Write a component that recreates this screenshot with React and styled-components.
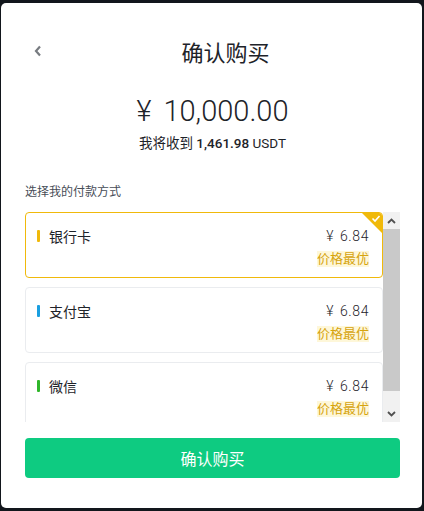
import React, { useState } from 'react';
import styled, { createGlobalStyle, css } from 'styled-components';

const GlobalStyle = createGlobalStyle`
  html, body {
    margin: 0;
    padding: 0;
    background: #12161c;
  }
  body {
    font-family: Roboto, "Noto Sans CJK SC", sans-serif;
    color: #1e2329;
  }
  * { box-sizing: border-box; }
`;

const methods = [
  { id: 'bank', name: '银行卡', price: '6.84', color: '#f0b90b' },
  { id: 'alipay', name: '支付宝', price: '6.84', color: '#1a9fe0' },
  { id: 'wechat', name: '微信', price: '6.84', color: '#2fb62a' },
];

const Chevron = ({ up }) => (
  <svg width="9" height="6" viewBox="0 0 9 6">
    <path
      d={up ? 'M1 5 L4.5 1.5 L8 5' : 'M1 1 L4.5 4.5 L8 1'}
      fill="none"
      stroke="#505050"
      strokeWidth="1.8"
    />
  </svg>
);

const App = () => {
  const [selected, setSelected] = useState('bank');

  return (
    <>
      <GlobalStyle />
      <Panel>
        <Header>
          <BackButton aria-label="返回">
            <svg width="8" height="12" viewBox="0 0 8 12">
              <path d="M6 1.5 L2 6 L6 10.5" fill="none" stroke="#777b80" strokeWidth="2.2" />
            </svg>
          </BackButton>
          <Title>确认购买</Title>
        </Header>

        <Amount><Currency gap={12}>¥</Currency>10,000.00</Amount>
        <Receive>
          我将收到 <strong>1,461.98</strong> USDT
        </Receive>

        <SectionLabel>选择我的付款方式</SectionLabel>

        <ListFrame>
          <MethodList>
            {methods.map(m => (
              <MethodCard
                key={m.id}
                active={selected === m.id}
                onClick={() => setSelected(m.id)}
              >
                <CardRow>
                  <MethodName barColor={m.color}>{m.name}</MethodName>
                  <Price><Currency gap={6}>¥</Currency>{m.price}</Price>
                </CardRow>
                <CardRow>
                  <span />
                  <BestTag>价格最优</BestTag>
                </CardRow>
                {selected === m.id && (
                  <CornerMark>
                    <svg width="22" height="22" viewBox="0 0 22 22">
                      <path d="M0 0 H22 V22 Z" fill="#f0b90b" />
                      <path d="M11.5 6.5 L14 9 L18.5 4" fill="none" stroke="#fff" strokeWidth="1.6" />
                    </svg>
                  </CornerMark>
                )}
              </MethodCard>
            ))}
          </MethodList>
          <ScrollBar>
            <ScrollArrow><Chevron up /></ScrollArrow>
            <ScrollTrack>
              <ScrollThumb />
            </ScrollTrack>
            <ScrollArrow><Chevron /></ScrollArrow>
          </ScrollBar>
        </ListFrame>

        <ConfirmButton>确认购买</ConfirmButton>
      </Panel>
    </>
  );
};

const Panel = styled.div`
  margin: 3px 2px 3px 1px;
  height: 505px;
  background: #fff;
  border-radius: 5px;
  padding: 29px 22px 0 24px;
  display: flex;
  flex-direction: column;
`;

const Header = styled.div`
  display: flex;
  align-items: center;
  height: 38px;
`;

const BackButton = styled.button`
  width: 26px;
  height: 26px;
  padding: 0 0 0 9px;
  border: none;
  background: none;
  display: flex;
  align-items: center;
  cursor: pointer;
`;

const Title = styled.h1`
  flex: 1;
  margin: 0;
  text-align: center;
  font-size: 22px;
  font-weight: 400;
  color: #1e2329;
`;

const Currency = styled.span`
  margin-right: ${({ gap }) => gap}px;
`;

const Amount = styled.div`
  margin-top: 23px;
  text-align: center;
  font-size: 29px;
  font-weight: 300;
  line-height: 36px;
  color: #1e2329;
`;

const Receive = styled.div`
  margin-top: 5px;
  text-align: center;
  font-size: 13.5px;
  line-height: 18px;
  color: #1e2329;

  strong {
    font-weight: 500;
  }
`;

const SectionLabel = styled.div`
  margin-top: 32px;
  font-size: 12px;
  line-height: 16px;
  color: #474d57;
`;

const ListFrame = styled.div`
  margin-top: 12px;
  height: 210px;
  display: flex;
`;

const MethodList = styled.div`
  flex: 1;
  min-width: 0;
  overflow: hidden;
`;

const ScrollBar = styled.div`
  width: 17px;
  display: flex;
  flex-direction: column;
  background: #f1f1f1;
`;

const ScrollArrow = styled.div`
  height: 17px;
  display: flex;
  align-items: center;
  justify-content: center;
`;

const ScrollTrack = styled.div`
  flex: 1;
`;

const ScrollThumb = styled.div`
  height: 162px;
  background: #c9c9c9;
`;

const MethodCard = styled.div`
  position: relative;
  height: 66px;
  margin-bottom: 9px;
  padding: 14px 13px 0 11px;
  border: 1px solid #eaecef;
  border-radius: 4px;
  overflow: hidden;
  cursor: pointer;
  ${({ active }) => active && css`
    border-color: #f0b90b;
  `}
`;

const CardRow = styled.div`
  display: flex;
  justify-content: space-between;
  align-items: center;
  height: 18px;

  & + & {
    margin-top: 5px;
  }
`;

const MethodName = styled.span`
  display: flex;
  align-items: center;
  font-size: 14px;
  color: #1e2329;

  &::before {
    content: '';
    width: 3px;
    height: 12px;
    border-radius: 1px;
    margin-right: 9px;
    background: ${({ barColor }) => barColor};
  }
`;

const Price = styled.span`
  font-size: 14px;
  font-weight: 300;
  color: #1e2329;
  letter-spacing: 0.6px;
`;

const BestTag = styled.span`
  font-size: 13px;
  line-height: 16px;
  color: #d6a40e;
  background: #fef7d9;
`;

const CornerMark = styled.span`
  position: absolute;
  top: -1px;
  right: -1px;
  width: 22px;
  height: 22px;
  display: flex;
`;

const ConfirmButton = styled.button`
  margin-top: 16px;
  height: 40px;
  border: none;
  border-radius: 4px;
  background: #0ecb81;
  color: #fff;
  font-family: Roboto, "Noto Sans CJK SC", sans-serif;
  font-size: 16px;
  cursor: pointer;
`;

export default App;
